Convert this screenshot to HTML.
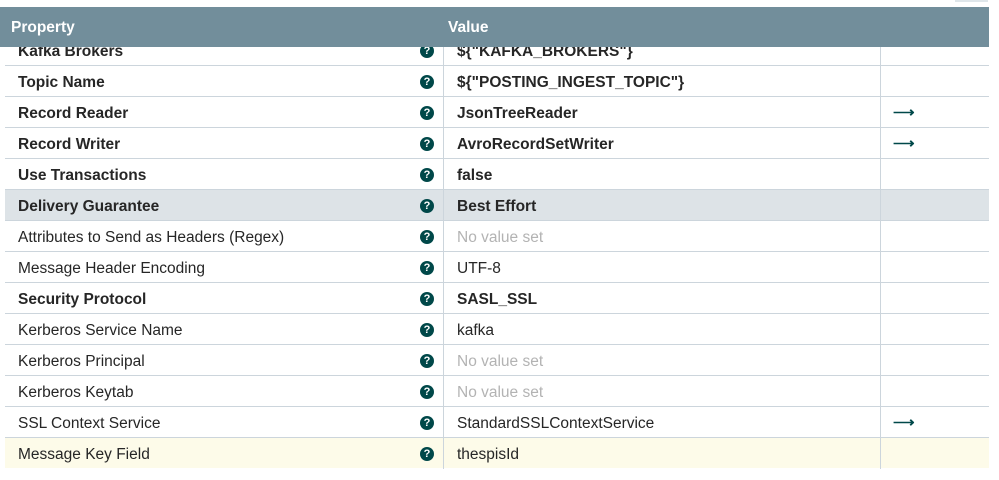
<!DOCTYPE html><html><head><style>
body{margin:0;width:999px;height:480px;background:#fff;position:relative;overflow:hidden;font-family:"Liberation Sans",sans-serif;}
.hdr{position:absolute;left:0;top:7px;width:989px;height:40px;background:#728e9b;color:#fff;font-weight:bold;font-size:15.5px;z-index:2;}
.hdr span{position:absolute;top:12px}
.tab{position:absolute;left:955px;top:0;width:33px;height:2px;background:#dfe6ea}
.row{position:absolute;left:5px;width:984px;height:30px;border-bottom:1px solid #ccd5dc;font-size:15.5px;color:#262626}
.row div{position:absolute;top:0;height:31px;line-height:33px}
.p{left:13px}
.q{left:415px;top:9px!important;width:14px;height:14px!important;border-radius:50%;background:#004849;color:#fff;font-size:11px;font-weight:bold;line-height:14px!important;text-align:center}
.v{left:438px;border-left:1px solid #ccd5dc;padding-left:13px;width:423px}
.e{left:875px;border-left:1px solid #ccd5dc;width:108px}
.a{left:888px;color:#004849;font-size:15px;font-weight:bold;line-height:31px!important}
.b{font-weight:bold}
.n{color:#b3b3b3}
</style></head><body>
<div class="tab"></div>
<div class="hdr"><span style="left:11px">Property</span><span style="left:448px">Value</span></div>
<div class="row b" style="top:35px"><div class="p">Kafka Brokers</div><div class="q">?</div><div class="v">${"KAFKA_BROKERS"}</div><div class="e"></div></div>
<div class="row b" style="top:66px"><div class="p">Topic Name</div><div class="q">?</div><div class="v">${"POSTING_INGEST_TOPIC"}</div><div class="e"></div></div>
<div class="row b" style="top:97px"><div class="p">Record Reader</div><div class="q">?</div><div class="v">JsonTreeReader</div><div class="e"></div><div class="a">⟶</div></div>
<div class="row b" style="top:128px"><div class="p">Record Writer</div><div class="q">?</div><div class="v">AvroRecordSetWriter</div><div class="e"></div><div class="a">⟶</div></div>
<div class="row b" style="top:159px"><div class="p">Use Transactions</div><div class="q">?</div><div class="v">false</div><div class="e"></div></div>
<div class="row b" style="top:190px;background:#dde3e7"><div class="p">Delivery Guarantee</div><div class="q">?</div><div class="v">Best Effort</div><div class="e"></div></div>
<div class="row" style="top:221px"><div class="p">Attributes to Send as Headers (Regex)</div><div class="q">?</div><div class="v n">No value set</div><div class="e"></div></div>
<div class="row" style="top:252px"><div class="p">Message Header Encoding</div><div class="q">?</div><div class="v">UTF-8</div><div class="e"></div></div>
<div class="row b" style="top:283px"><div class="p">Security Protocol</div><div class="q">?</div><div class="v">SASL_SSL</div><div class="e"></div></div>
<div class="row" style="top:314px"><div class="p">Kerberos Service Name</div><div class="q">?</div><div class="v">kafka</div><div class="e"></div></div>
<div class="row" style="top:345px"><div class="p">Kerberos Principal</div><div class="q">?</div><div class="v n">No value set</div><div class="e"></div></div>
<div class="row" style="top:376px"><div class="p">Kerberos Keytab</div><div class="q">?</div><div class="v n">No value set</div><div class="e"></div></div>
<div class="row" style="top:407px"><div class="p">SSL Context Service</div><div class="q">?</div><div class="v">StandardSSLContextService</div><div class="e"></div><div class="a">⟶</div></div>
<div class="row" style="top:438px;background:#fdfbe9;border-bottom:none"><div class="p">Message Key Field</div><div class="q">?</div><div class="v">thespisId</div><div class="e"></div></div>
</body></html>
